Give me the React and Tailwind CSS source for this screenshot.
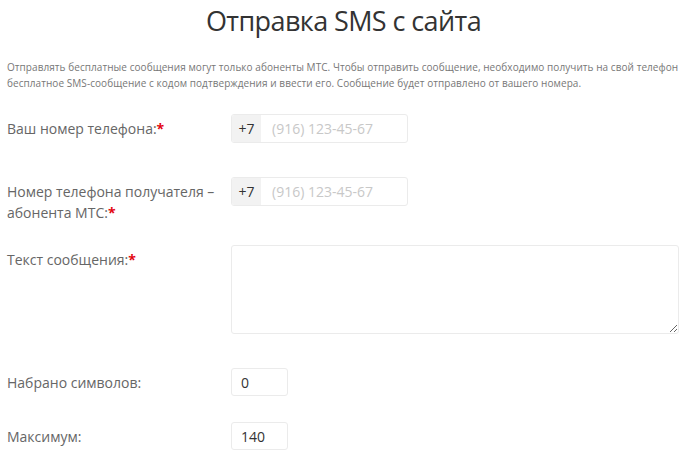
import React from "react";

function Label({ children, required }) {
  return (
    <div className="w-[224px] shrink-0 pt-[4px] text-[14px] leading-[21px] text-[#666]">
      {children}
      {required && <span className="text-[#e30611] font-bold">*</span>}
    </div>
  );
}

function PhoneInput() {
  return (
    <div className="flex h-[29px] w-[177px] rounded-[3px] border border-[#ebebeb] overflow-hidden">
      <span className="w-[29px] shrink-0 bg-[#f2f2f2] flex items-center justify-center text-[14px] text-[#333]">+7</span>
      <input
        className="flex-1 min-w-0 px-[11px] text-[14px] text-[#333] placeholder:text-[#c8c8c8] outline-none"
        placeholder="(916) 123-45-67"
      />
    </div>
  );
}

export default function App() {
  return (
    <main className="w-[680px] h-[457px] bg-white overflow-hidden font-['Open_Sans',sans-serif] pl-[7px]">
      <h1 className="text-center text-[27px] leading-[36px] pt-[3px] text-[#333] tracking-[-0.6px]">Отправка SMS с сайта</h1>

      <p className="mt-[20px] text-[10px] leading-[16px] text-[#777] tracking-[0.06px]">
        Отправлять бесплатные сообщения могут только абоненты МТС. Чтобы отправить сообщение, необходимо получить на свой телефон
        бесплатное SMS-сообщение с кодом подтверждения и ввести его. Сообщение будет отправлено от вашего номера.
      </p>

      <div className="flex mt-[23px]">
        <Label required>Ваш номер телефона:</Label>
        <PhoneInput />
      </div>

      <div className="flex mt-[34px]">
        <Label required>Номер телефона получателя –<br />абонента МТС:</Label>
        <PhoneInput />
      </div>

      <div className="flex mt-[22px]">
        <Label required>Текст сообщения:</Label>
        <textarea className="w-[448px] h-[89px] rounded-[3px] border border-[#ebebeb] outline-none resize-y p-2 text-[14px]" />
      </div>

      <div className="flex mt-[34px]">
        <Label>Набрано символов:</Label>
        <div className="w-[57px] h-[28px] rounded-[3px] border border-[#ebebeb] flex items-center px-[9px] text-[14px] text-[#333]">0</div>
      </div>

      <div className="flex mt-[26px]">
        <Label>Максимум:</Label>
        <div className="w-[57px] h-[28px] rounded-[3px] border border-[#ebebeb] flex items-center px-[9px] text-[14px] text-[#333]">140</div>
      </div>
    </main>
  );
}
